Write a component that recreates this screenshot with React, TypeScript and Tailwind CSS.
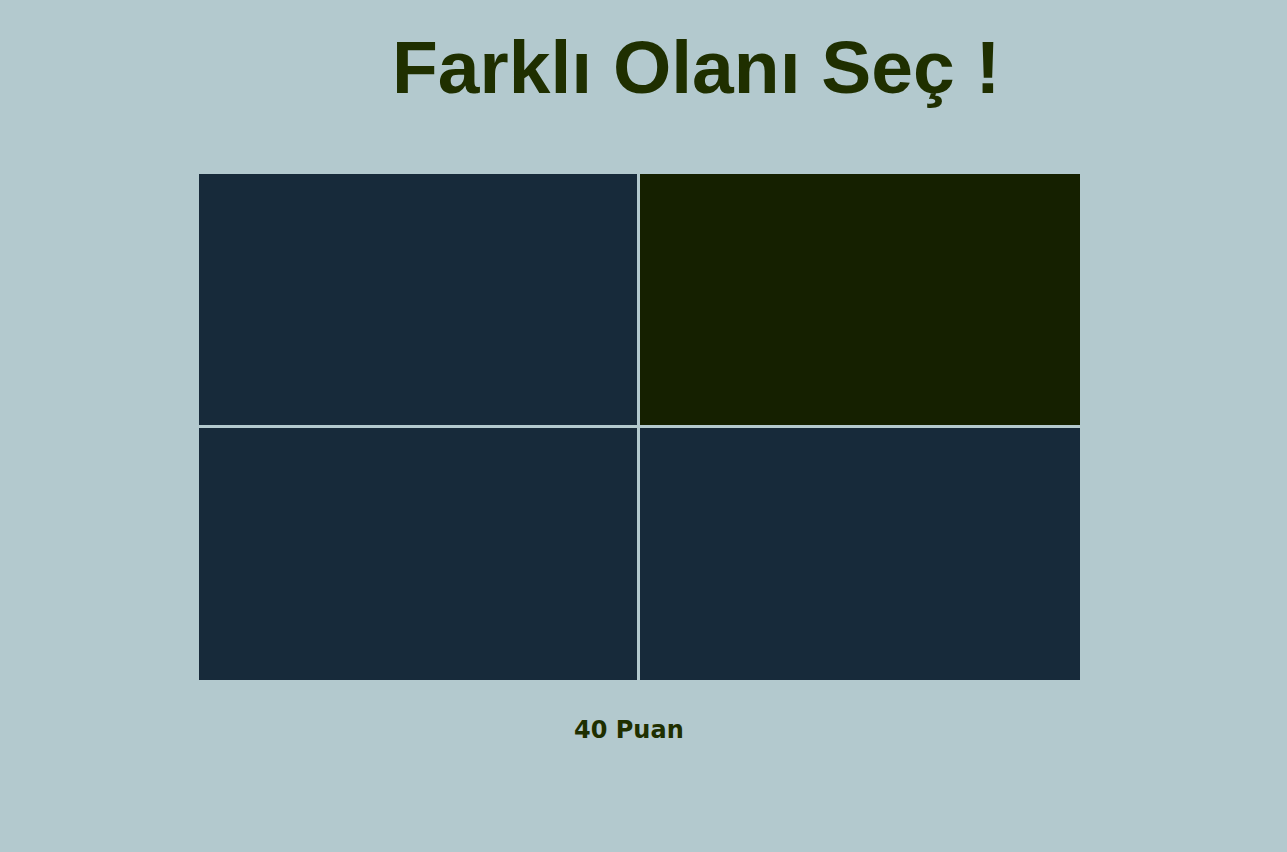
const cells = [false, true, false, false];

const App = () => {
  return (
    <div className="min-h-[852px] w-full bg-[#b3c9ce]">
      <h1 className="pl-[392px] pt-[24px] font-['Liberation_Sans',Arial,sans-serif] text-[75px] font-bold leading-[86px] text-[#1f2f00]">
        Farklı Olanı Seç !
      </h1>

      <div className="ml-[199px] mt-[64px] grid h-[506px] w-[881px] grid-cols-[438px_440px] grid-rows-[251px_252px] gap-[3px]">
        {cells.map((odd, i) => (
          <div
            key={i}
            className={odd ? "bg-[#152000] cursor-pointer" : "bg-[#172a3a] cursor-pointer"}
          />
        ))}
      </div>

      <p className="mt-[36px] pl-[574px] font-['DejaVu_Sans',Verdana,sans-serif] text-[24px] font-bold leading-[28px] text-[#1f2f00]">
        40 Puan
      </p>
    </div>
  );
};

export default App;
